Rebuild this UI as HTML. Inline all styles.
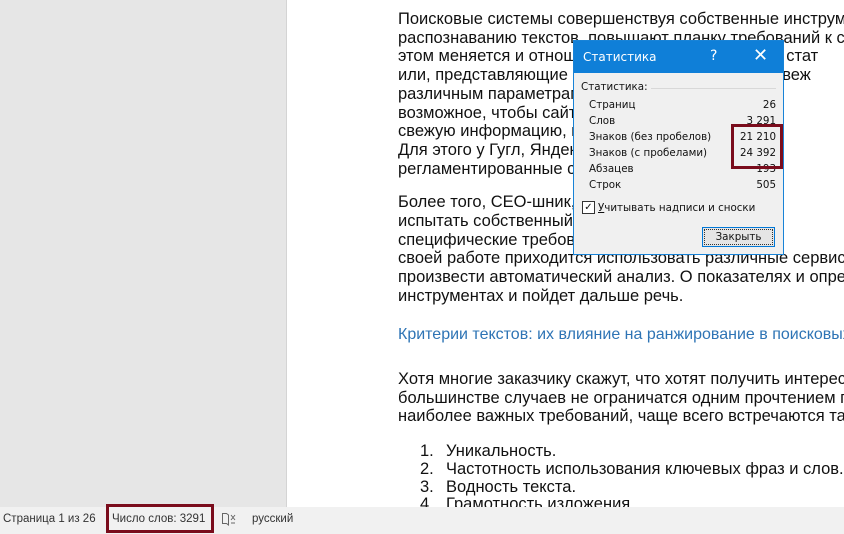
<!DOCTYPE html>
<html><head><meta charset="utf-8"><style>
body{margin:0;width:844px;height:534px;overflow:hidden;position:relative;background:#fff;font-family:"Liberation Sans",Arial,sans-serif}
.left{position:absolute;left:0;top:0;width:286px;height:507px;background:#e6e6e6;border-right:1px solid #d4d4d4}
.doc{position:absolute;left:398px;top:10px;width:460px;font-size:16.5px;line-height:18.7px;color:#111;white-space:nowrap}
.doc p{margin:0}
.li{padding-left:22px}
.li i{font-style:normal;display:inline-block;width:26px}
.h{color:#2e74b5;font-size:16px;position:absolute;left:398px;top:326px;white-space:nowrap}
.status{position:absolute;left:0;top:507px;width:844px;height:27px;background:#f1f1f1;font-size:11.5px;color:#333}
.status span{position:absolute;top:6px}
.red{position:absolute;border:3px solid #7a0c1c;box-sizing:border-box}
.dlg{position:absolute;left:573px;top:40px;width:211px;height:215px;background:#f0f0f0;border:1px solid #1883d7;box-sizing:border-box;font-family:"DejaVu Sans",sans-serif;font-size:10.3px;color:#111}
.tb{height:32px;background:#0f7fd8;color:#fff;position:relative;font-size:12px}
.row{position:absolute;left:15px;right:7px}
.row b{font-weight:normal;position:absolute;right:0}
</style></head><body>
<div class="left"></div>
<div class="doc">
<p>Поисковые системы совершенствуя собственные инструме</p>
<p>распознаванию текстов, повышают планку требований к ста</p>
<p>этом меняется и отношение к тем, кто предлагает стат</p>
<p>или, представляющие интерес и предоставляют свеж</p>
<p>различным параметрам. Все больше желания</p>
<p>возможное, чтобы сайт отвечал специ</p>
<p>свежую информацию, к текстам с</p>
<p>Для этого у Гугл, Яндекс и конференции,</p>
<p>регламентированные се</p>
<p style="margin-top:15px">Более того, СЕО-шник, владелец сайта,</p>
<p>испытать собственный когда у нег</p>
<p>специфические требова соответствова</p>
<p>своей работе приходится использовать различные сервис</p>
<p>произвести автоматический анализ. О показателях и опред</p>
<p>инструментах и пойдет дальше речь.</p>
</div>
<div class="h">Критерии текстов: их влияние на ранжирование в поисковых</div>
<div class="doc" style="top:370px">
<p>Хотя многие заказчику скажут, что хотят получить интересн</p>
<p>большинстве случаев не ограничатся одним прочтением пр</p>
<p>наиболее важных требований, чаще всего встречаются так</p>
<p class="li" style="margin-top:16px"><i>1.</i>Уникальность.</p>
<p class="li" style="margin-top:-1px"><i>2.</i>Частотность использования ключевых фраз и слов.</p>
<p class="li" style="margin-top:-1px"><i>3.</i>Водность текста.</p>
<p class="li" style="margin-top:-1px"><i>4.</i>Грамотность изложения</p>
</div>
<div class="status">
<span style="left:3px">Страница 1 из 26</span>
<span style="left:112px">Число слов: 3291</span>
<svg style="position:absolute;left:221px;top:5px" width="16" height="14" viewBox="0 0 16 14" fill="none" stroke="#666" stroke-width="1"><path d="M1.5 1.5h4l2 1.5v10l-2-1.5h-4z"/><path d="M7.5 3v10"/><path d="M10 3l4 5M14 3l-4 5M10 11h4"/></svg>
<span style="left:252px">русский</span>
</div>
<div class="red" style="left:106px;top:504px;width:108px;height:29px"></div>
<div class="dlg">
<div class="tb"><span style="position:absolute;left:9px;top:9px">Статистика</span><span style="position:absolute;left:136px;top:7px;font-size:14px">?</span><span style="position:absolute;left:179px;top:4px;font-size:18px">✕</span></div>
<div class="row" style="left:7px;top:40px">Статистика:<span style="position:absolute;left:70px;right:0;top:7px;border-top:1px solid #d8d8d8"></span></div>
<div class="row" style="top:58px">Страниц<b>26</b></div>
<div class="row" style="top:74px">Слов<b>3 291</b></div>
<div class="row" style="top:90px">Знаков (без пробелов)<b>21 210</b></div>
<div class="row" style="top:106px">Знаков (с пробелами)<b>24 392</b></div>
<div class="row" style="top:122px">Абзацев<b>193</b></div>
<div class="row" style="top:138px">Строк<b>505</b></div>
<div style="position:absolute;left:8px;top:160px;width:11px;height:11px;border:1px solid #333;background:#fff;font-size:10px;line-height:11px;text-align:center">✓</div>
<div style="position:absolute;left:24px;top:161px"><u>У</u>читывать надписи и сноски</div>
<div style="position:absolute;left:128px;top:186px;width:73px;height:20px;border:1px solid #0078d7;box-sizing:border-box;background:#e5e5e5;text-align:center;line-height:18px;outline:1px dotted #333;outline-offset:-3px">Закрыть</div>
</div>
<div class="red" style="left:731px;top:124px;width:52px;height:45px"></div>
</body></html>
